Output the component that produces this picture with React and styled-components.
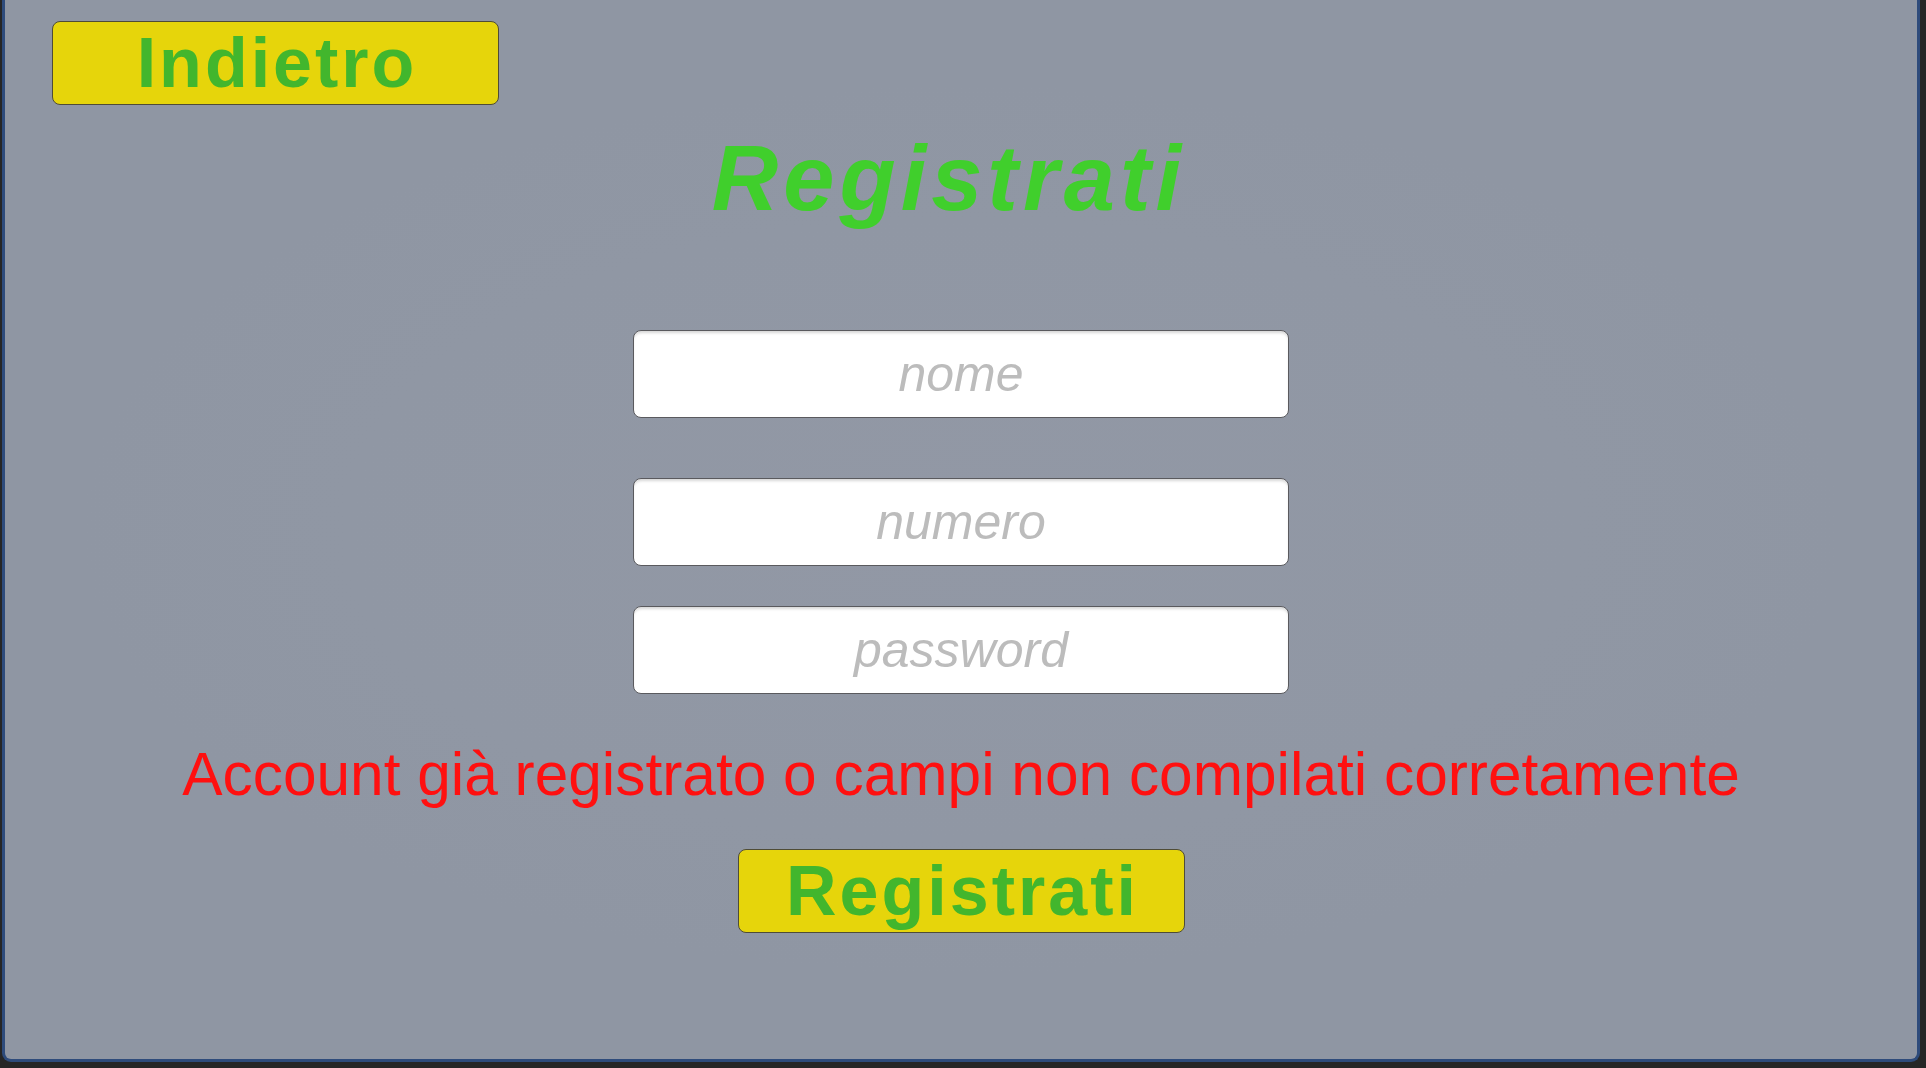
import React, { useState } from "react";
import styled, { createGlobalStyle } from "styled-components";

const GlobalStyle = createGlobalStyle`
  html, body {
    margin: 0;
    padding: 0;
    background: #262626;
    overflow: hidden;
  }
  body {
    font-family: "Liberation Sans", Arial, sans-serif;
  }
  * {
    box-sizing: border-box;
  }
`;

const Frame = styled.div`
  width: 1918px;
  height: 1062px;
  margin-left: 2px;
  border: 3px solid #2e4b7b;
  border-top: none;
  border-radius: 0 0 9px 9px;
  background: radial-gradient(
    ellipse 46% 42% at 50% 50%,
    #9298a5 0%,
    #9097a4 70%,
    #8f96a3 100%
  );
  display: flex;
  flex-direction: column;
  align-items: center;
  padding: 21px 47px 0 47px;
`;

const TopBar = styled.div`
  align-self: stretch;
  display: flex;
`;

const YellowButton = styled.button`
  width: 447px;
  height: 84px;
  border: 1.5px solid #4f4c36;
  border-radius: 8px;
  background: #e6d50b;
  color: #42b62d;
  font-family: "Liberation Sans", Arial, sans-serif;
  font-weight: bold;
  font-size: 70px;
  line-height: 1;
  letter-spacing: 3px;
  display: flex;
  align-items: center;
  justify-content: center;
  padding: 0 0 0 3px;
  cursor: pointer;
  margin-top: ${(p) => p.$top || 0}px;
`;

const Title = styled.h1`
  margin: 27px 24px 0 0;
  font-family: "Liberation Sans", Arial, sans-serif;
  font-style: italic;
  font-weight: bold;
  font-size: 92px;
  line-height: 1;
  letter-spacing: 5px;
  color: #40cf2c;
`;

const Field = styled.input`
  width: 656px;
  height: 88px;
  margin-top: ${(p) => p.$top}px;
  border: 1.5px solid #5a5a5e;
  border-radius: 8px;
  background: #ffffff;
  box-shadow: inset 0 3px 3px -1px rgba(0, 0, 0, 0.16);
  font-family: "Liberation Sans", Arial, sans-serif;
  font-style: italic;
  font-size: 50px;
  text-align: center;
  color: #333;
  outline: none;
  padding: 0 10px;

  &::placeholder {
    color: #bcbcbc;
    font-style: italic;
  }
`;

const ErrorText = styled.p`
  margin: 50px 0 0 0;
  font-family: "Liberation Sans", Arial, sans-serif;
  font-size: 60.4px;
  line-height: 1;
  color: #ff1010;
  white-space: nowrap;
`;

export default function App() {
  const [values, setValues] = useState({ nome: "", numero: "", password: "" });

  const onChange = (e) => {
    setValues({ ...values, [e.target.name]: e.target.value });
  };

  return (
    <>
      <GlobalStyle />
      <Frame>
        <TopBar>
          <YellowButton type="button">Indietro</YellowButton>
        </TopBar>
        <Title>Registrati</Title>
        <Field
          $top={106}
          name="nome"
          placeholder="nome"
          value={values.nome}
          onChange={onChange}
        />
        <Field
          $top={60}
          name="numero"
          placeholder="numero"
          value={values.numero}
          onChange={onChange}
        />
        <Field
          $top={40}
          type="password"
          name="password"
          placeholder="password"
          value={values.password}
          onChange={onChange}
        />
        <ErrorText>
          Account già registrato o campi non compilati corretamente
        </ErrorText>
        <YellowButton type="submit" $top={45}>
          Registrati
        </YellowButton>
      </Frame>
    </>
  );
}
